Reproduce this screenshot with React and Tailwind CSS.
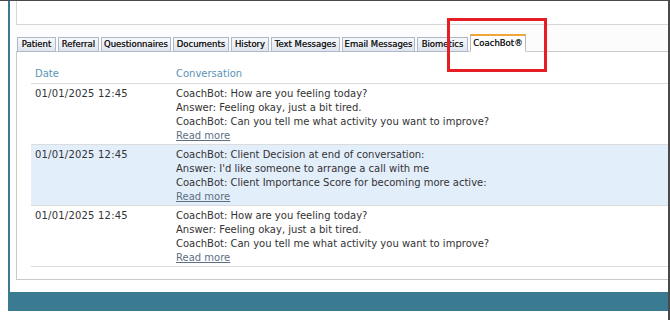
import React from 'react';

const tabs = [
    { label: 'Patient', w: 'w-[39px]' },
    { label: 'Referral', w: 'w-[41px]' },
    { label: 'Questionnaires', w: 'w-[70px]' },
    { label: 'Documents', w: 'w-[56px]' },
    { label: 'History', w: 'w-[38px]' },
    { label: 'Text Messages', w: 'w-[69px]' },
    { label: 'Email Messages', w: 'w-[73px]' },
    { label: 'Biometics', w: 'w-[51px]' },
];

const rows = [
    {
        date: '01/01/2025 12:45',
        lines: [
            'CoachBot: How are you feeling today?',
            'Answer: Feeling okay, just a bit tired.',
            'CoachBot: Can you tell me what activity you want to improve?',
        ],
    },
    {
        date: '01/01/2025 12:45',
        lines: [
            'CoachBot: Client Decision at end of conversation:',
            "Answer: I'd like someone to arrange a call with me",
            'CoachBot: Client Importance Score for becoming more active:',
        ],
        highlight: true,
    },
    {
        date: '01/01/2025 12:45',
        lines: [
            'CoachBot: How are you feeling today?',
            'Answer: Feeling okay, just a bit tired.',
            'CoachBot: Can you tell me what activity you want to improve?',
        ],
    },
];

const App = () => {
    return (
        <div className="relative w-[670px] h-[320px] overflow-hidden bg-white border-t border-r-2 border-[#4a4a4a] font-['DejaVu_Sans',Verdana,sans-serif] text-[10px] text-[#333]">
            <div className="ml-[8px] h-[291px] border-l-2 border-[#3a7b91] pl-[6px] flex flex-col">
                {/* upper panel */}
                <div className="h-[24px] border-l border-b border-[#d6d6d6]" />

                {/* tab strip */}
                <div className="h-[27px] bg-[#fcfcfc] flex items-end pl-[1px] border-b border-[#c9c9c9]">
                    {tabs.map((tab) => (
                        <div
                            key={tab.label}
                            className={`${tab.w} h-[15px] mr-[2px] -mb-[1px] flex items-center justify-center border border-[#aeb8c8] bg-gradient-to-b from-[#f6f8fb] to-[#dfe5ee] text-[#1a1a1a] text-[8.5px] whitespace-nowrap [text-shadow:0_0_0.4px_#333]`}
                        >
                            {tab.label}
                        </div>
                    ))}
                    <div className="w-[56px] h-[18px] -mb-[1px] flex items-center justify-center border border-[#b8b8b8] border-t-2 border-t-[#f0a63a] border-b-white bg-white text-[#1a1a1a] text-[8.5px] whitespace-nowrap [text-shadow:0_0_0.4px_#333]">
                        CoachBot®
                    </div>
                </div>

                {/* content */}
                <div className="flex-1 border-l border-b border-[#c9c9c9] pl-[14px] pt-[11px] mb-[12px]">
                    <div className="flex h-[21px] items-center border-b border-[#dcdcdc] text-[#5b93b8]">
                        <div className="w-[141px] pl-[4px]">Date</div>
                        <div className="pl-[4px]">Conversation</div>
                    </div>
                    {rows.map((row, i) => (
                        <div
                            key={i}
                            className={`flex h-[61px] border-b border-[#dcdcdc] pt-[3px] ${row.highlight ? 'bg-[#e3eefb]' : 'bg-white'}`}
                        >
                            <div className="w-[141px] pl-[4px] leading-[14px] tracking-[0.2px]">{row.date}</div>
                            <div className="pl-[4px] leading-[14px]">
                                {row.lines.map((line) => (
                                    <div key={line} className="whitespace-nowrap">{line}</div>
                                ))}
                                <div className="text-[#5d6f82] underline leading-[13px]">Read more</div>
                            </div>
                        </div>
                    ))}
                </div>
            </div>

            {/* footer */}
            <div className="ml-[8px] h-[19px] bg-[#3a7b91]" />

            {/* annotation box */}
            <div className="absolute left-[447px] top-[17px] w-[100px] h-[54px] border-[3px] border-[#e41e24]" />
        </div>
    );
};

export default App;
